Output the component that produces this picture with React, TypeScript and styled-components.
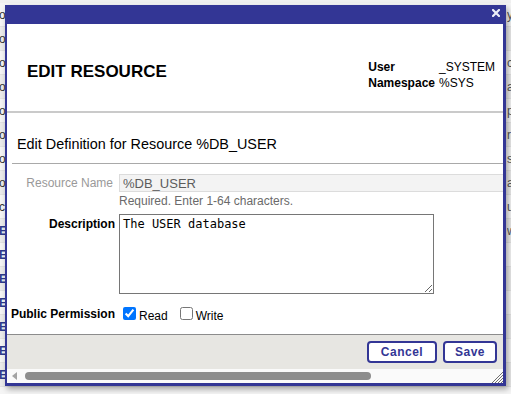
import React from "react";
import styled, { createGlobalStyle } from "styled-components";

const GlobalStyle = createGlobalStyle`
  html, body { margin: 0; padding: 0; }
  body {
    background: #f0f0f0;
    font-family: "Liberation Sans", Arial, sans-serif;
    overflow: hidden;
  }
`;

const Page = styled.div`
  position: relative;
  width: 511px;
  height: 394px;
  overflow: hidden;
  background: #f0f0f0;
`;

const BgList = styled.div`
  display: flex;
  flex-direction: column;
  padding-top: 3px;
`;

const BgRow = styled.div<{ $alt: boolean }>`
  display: grid;
  grid-template-columns: 1fr 4px;
  height: 24px;
  align-items: center;
  box-sizing: border-box;
  border-bottom: 1px solid #e2e2e2;
  background: ${(p) => (p.$alt ? "#ebebeb" : "#f5f5f5")};
  font-size: 12px;
  white-space: nowrap;
`;

const BgLeft = styled.span<{ $link: boolean }>`
  color: ${(p) => (p.$link ? "#2d3a8c" : "#333")};
  font-weight: ${(p) => (p.$link ? "bold" : "normal")};
  margin-left: -1px;
`;

const BgRight = styled.span`
  overflow: hidden;
  color: #555;
`;

const Dialog = styled.div`
  position: absolute;
  left: 5px;
  top: 5px;
  width: 501px;
  height: 381px;
  box-sizing: border-box;
  border: 2px solid #333695;
  border-right-width: 3px;
  border-bottom-width: 3px;
  background: #fff;
  display: flex;
  flex-direction: column;
  box-shadow: 2px 3px 6px rgba(0, 0, 0, 0.35);
`;

const TitleBar = styled.div`
  height: 17px;
  flex: none;
  background: #333695;
  display: flex;
  justify-content: flex-end;
  align-items: flex-start;
  padding: 2px 3px 0 0;
  box-sizing: border-box;
`;

const Body = styled.div`
  flex: 1;
  display: flex;
  flex-direction: column;
  overflow: hidden;
  min-height: 0;
`;

const Header = styled.div`
  height: 89px;
  box-sizing: border-box;
  flex: none;
  border-bottom: 2px solid #cacaca;
  display: flex;
  justify-content: space-between;
  align-items: flex-start;
  padding: 35px 8px 0 20px;
`;

const Title = styled.h1`
  margin: 3px 0 0 0;
  font-size: 17px;
  line-height: 20px;
  font-weight: bold;
  color: #000;
`;

const Info = styled.div`
  display: grid;
  grid-template-columns: auto auto;
  column-gap: 4px;
  font-size: 12px;
  line-height: 16px;
  color: #000;
`;

const InfoKey = styled.span`
  font-weight: bold;
`;

const InfoVal = styled.span``;

const SectionTitle = styled.div`
  margin-left: 5px;
  padding: 23px 0 10px 5px;
  border-bottom: 1px solid #a9a9a9;
  font-size: 14.4px;
  line-height: 17px;
  color: #000;
  flex: none;
`;

const Form = styled.div`
  flex: 1;
  display: flex;
  flex-direction: column;
  padding-top: 10px;
  min-height: 0;
`;

const FieldRow = styled.div<{ $gap?: number; $center?: boolean }>`
  display: grid;
  grid-template-columns: 112px 1fr;
  align-items: ${(p) => (p.$center ? "center" : "start")};
  margin-top: ${(p) => p.$gap ?? 0}px;
`;

const Label = styled.div<{ $muted?: boolean; $top?: number }>`
  text-align: right;
  font-size: 12px;
  line-height: 18px;
  white-space: nowrap;
  font-weight: ${(p) => (p.$muted ? "normal" : "bold")};
  color: ${(p) => (p.$muted ? "#999" : "#000")};
  padding-right: ${(p) => (p.$muted ? 6 : 4)}px;
  padding-top: ${(p) => p.$top ?? 0}px;
`;

const FieldCell = styled.div`
  display: flex;
  flex-direction: column;
  align-items: flex-start;
  min-width: 0;
`;

const TextInput = styled.input`
  width: 440px;
  height: 18px;
  box-sizing: border-box;
  border: 1px solid #dcdcdc;
  background: #f3f3f3;
  color: #5c5c5c;
  font-family: "Liberation Sans", Arial, sans-serif;
  font-size: 13px;
  padding: 0 3px;
  margin: 0;
  outline: none;
`;

const Hint = styled.div`
  margin-top: 2px;
  font-size: 12px;
  line-height: 14px;
  color: #6a6a6a;
`;

const TextArea = styled.textarea`
  display: block;
  width: 315px;
  height: 80px;
  box-sizing: border-box;
  margin: 0;
  padding: 2px 3px;
  border: 1px solid #767676;
  font-family: "DejaVu Sans Mono", "Liberation Mono", monospace;
  font-size: 12px;
  line-height: 15px;
  color: #000;
  background: #fff;
`;

const Checks = styled.div`
  display: flex;
  align-items: center;
  gap: 8px;
`;

const CheckLabel = styled.label`
  display: inline-flex;
  align-items: center;
  font-size: 12px;
  color: #000;
`;

const CheckText = styled.span`
  padding-top: 4px;
`;

const Footer = styled.div`
  flex: none;
  height: 35px;
  box-sizing: border-box;
  border-top: 1px solid #8c8c8c;
  background: #e7e6e2;
  display: flex;
  justify-content: flex-end;
  align-items: flex-start;
  gap: 6px;
  padding: 6px 6px 0 0;
`;

const Button = styled.button<{ $w: number }>`
  width: ${(p) => p.$w}px;
  height: 22px;
  box-sizing: border-box;
  border: 2px solid #333695;
  border-radius: 4px;
  background: #fff;
  color: #333695;
  font-family: "Liberation Sans", Arial, sans-serif;
  font-weight: bold;
  font-size: 12px;
  letter-spacing: 0.5px;
  padding: 0;
  cursor: pointer;
`;

const ScrollRow = styled.div`
  flex: none;
  height: 14px;
  background: #fafafa;
  display: flex;
  align-items: center;
  padding-left: 5px;
  gap: 8px;
`;

const Thumb = styled.div`
  width: 346px;
  height: 8px;
  border-radius: 4px;
  background: #8d8d8d;
`;

const Grip = styled.div`
  margin-left: auto;
  align-self: flex-end;
  width: 11px;
  height: 11px;
  display: flex;
`;

const bgLeft = ["o", "o", "o", "o", "o", "o", "o", "o", "c", "E", "E", "E", "E", "E", "E", "E", "E"];
const bgRight = ["y", "", "c", "a", "p", "ro", "s", "a", "u", "w", "", "", "", "", "", "", ""];

export default function App() {
  return (
    <Page>
      <GlobalStyle />
      <BgList>
        {bgLeft.map((c, i) => (
          <BgRow key={i} $alt={i % 2 === 1}>
            <BgLeft $link={c === "E"}>{c}</BgLeft>
            <BgRight>{bgRight[i]}</BgRight>
          </BgRow>
        ))}
      </BgList>

      <Dialog>
        <TitleBar>
          <svg width="8" height="8" viewBox="0 0 8 8">
            <path d="M1 1 L7 7 M7 1 L1 7" stroke="#eceef8" strokeWidth="2.2" strokeLinecap="square" />
          </svg>
        </TitleBar>
        <Body>
          <Header>
            <Title>EDIT RESOURCE</Title>
            <Info>
              <InfoKey>User</InfoKey>
              <InfoVal>_SYSTEM</InfoVal>
              <InfoKey>Namespace</InfoKey>
              <InfoVal>%SYS</InfoVal>
            </Info>
          </Header>
          <SectionTitle>Edit Definition for Resource %DB_USER</SectionTitle>
          <Form>
            <FieldRow>
              <Label $muted>Resource Name</Label>
              <FieldCell>
                <TextInput readOnly defaultValue="%DB_USER" />
                <Hint>Required. Enter 1-64 characters.</Hint>
              </FieldCell>
            </FieldRow>
            <FieldRow $gap={6}>
              <Label $top={1}>Description</Label>
              <FieldCell>
                <TextArea defaultValue="The USER database" spellCheck={false} />
              </FieldCell>
            </FieldRow>
            <FieldRow $gap={10} $center>
              <Label>Public Permission</Label>
              <Checks>
                <CheckLabel>
                  <input type="checkbox" defaultChecked />
                  <CheckText>Read</CheckText>
                </CheckLabel>
                <CheckLabel>
                  <input type="checkbox" />
                  <CheckText>Write</CheckText>
                </CheckLabel>
              </Checks>
            </FieldRow>
          </Form>
          <Footer>
            <Button $w={70}>Cancel</Button>
            <Button $w={54}>Save</Button>
          </Footer>
          <ScrollRow>
            <svg width="5" height="8" viewBox="0 0 5 8">
              <polygon points="5,0 5,8 0,4" fill="#a3a3a3" />
            </svg>
            <Thumb />
            <Grip>
              <svg width="11" height="11" viewBox="0 0 11 11">
                <path d="M11 0 L0 11 M11 3 L3 11 M11 6 L6 11 M11 9 L9 11" stroke="#6f6f6f" strokeWidth="1" />
              </svg>
            </Grip>
          </ScrollRow>
        </Body>
      </Dialog>
    </Page>
  );
}
